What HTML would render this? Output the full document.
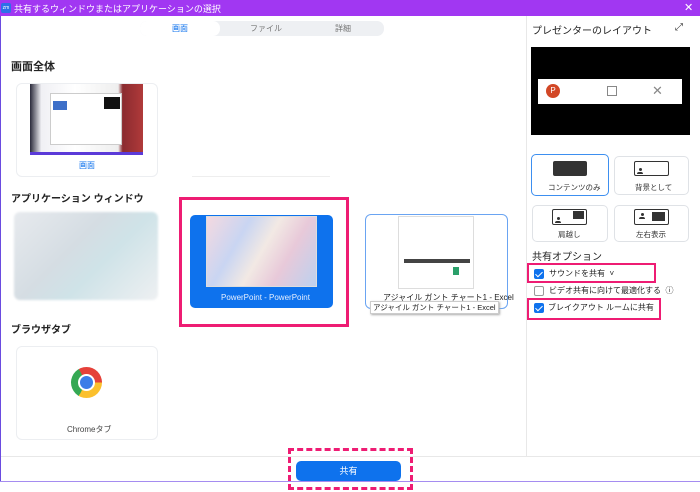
<!DOCTYPE html>
<html><head><meta charset="utf-8"><style>
*{margin:0;padding:0;box-sizing:border-box}
body{width:700px;height:492px;background:#fff;font-family:"Liberation Sans","Noto Sans CJK JP",sans-serif;position:relative;overflow:hidden;color:#222}
.a{position:absolute}
.t{font-size:10px;white-space:nowrap}
.card{position:absolute;border:1px solid #eceef1;border-radius:6px;background:#fff}
.lb{position:absolute;border:1px solid #dfe2e6;border-radius:5px;background:#fff}
.cb{position:absolute;width:10px;height:10px;border-radius:2px;background:#0e72ed}
.cb:after{content:"";position:absolute;left:3px;top:1px;width:3px;height:6px;border:solid #fff;border-width:0 1.5px 1.5px 0;transform:rotate(45deg)}
.ic{position:absolute;border:1.5px solid #333;border-radius:2px;background:#fff}
.p{position:absolute;width:6px;height:6px}
.p:before{content:"";position:absolute;left:1.5px;top:0;width:3px;height:3px;border-radius:50%;background:#333}
.p:after{content:"";position:absolute;left:0;top:3.5px;width:6px;height:2.5px;border-radius:2px 2px 0 0;background:#333}
</style></head><body>
<div class="a" style="left:0;top:0;width:700px;height:16px;background:#a137f2"></div>
<div class="a" style="left:1px;top:3px;width:10px;height:10px;background:#2d6fe8;border-radius:2px;color:#fff;font-size:5px;line-height:10px;text-align:center">zm</div>
<div class="a t" style="left:14px;top:2px;color:#fff;font-size:9px">共有するウィンドウまたはアプリケーションの選択</div>
<div class="a t" style="left:684px;top:1px;color:#fff;font-size:11px">✕</div>
<div class="a" style="left:0;top:16px;width:1px;height:466px;background:#6a4be0"></div>
<div class="a" style="left:0;top:481px;width:700px;height:1px;background:#a58cf0"></div>
<div class="a" style="left:140px;top:21px;width:244px;height:15px;background:#eef0f3;border-radius:7px"></div>
<div class="a" style="left:140px;top:21px;width:80px;height:15px;background:#fff;border-radius:7px"></div>
<div class="a t" style="left:172px;top:23px;font-size:8px;color:#0e72ed">画面</div>
<div class="a t" style="left:250px;top:23px;font-size:8px;color:#777">ファイル</div>
<div class="a t" style="left:335px;top:23px;font-size:8px;color:#777">詳細</div>
<div class="a t" style="left:11px;top:58px;font-size:11px;font-weight:bold">画面全体</div>
<div class="card" style="left:16px;top:83px;width:142px;height:94px"></div>
<div class="a" style="left:30px;top:84px;width:113px;height:71px;background:linear-gradient(90deg,#2a2a3a 0%,#f0f0f4 10%,#fff 40%,#eee 78%,#8b2b30 82%,#b03a3a 100%);border-bottom:3px solid #5b3ad8"></div>
<div class="a" style="left:50px;top:93px;width:72px;height:52px;background:#fff;border:1px solid #ccc"></div>
<div class="a" style="left:53px;top:101px;width:14px;height:9px;background:#3d6fc8"></div>
<div class="a" style="left:104px;top:97px;width:16px;height:12px;background:#111"></div>
<div class="a t" style="left:79px;top:160px;font-size:8px;color:#0e72ed">画面</div>
<div class="a" style="left:192px;top:176px;width:138px;height:1px;background:#eee"></div>
<div class="a t" style="left:11px;top:190px;font-size:10px;font-weight:bold">アプリケーション ウィンドウ</div>
<div class="a" style="left:14px;top:212px;width:144px;height:88px;border-radius:6px;background:linear-gradient(135deg,#e7eaee,#d5dde3 40%,#cfe3e8 60%,#eef0f2);filter:blur(1px)"></div>
<div class="a" style="left:179px;top:197px;width:170px;height:130px;border:3px solid #ee1c73"></div>
<div class="a" style="left:190px;top:215px;width:143px;height:93px;background:#0e72ed;border-radius:5px"></div>
<div class="a" style="left:206px;top:216px;width:111px;height:71px;background:linear-gradient(120deg,#f4d9e0,#c9d5f2 30%,#f2e9e4 50%,#e8c9d9 70%,#bcd1ef);border:1px solid #ddd"></div>
<div class="a t" style="left:221px;top:293px;font-size:8px;color:#e6efff">PowerPoint - PowerPoint</div>
<div class="a" style="left:365px;top:214px;width:143px;height:95px;border:1px solid #6aa4f2;border-radius:6px"></div>
<div class="a" style="left:398px;top:216px;width:76px;height:73px;background:#fff;border:1px solid #ddd"></div>
<div class="a" style="left:404px;top:259px;width:66px;height:4px;background:#444"></div>
<div class="a" style="left:453px;top:267px;width:6px;height:8px;background:#2aa06a"></div>
<div class="a t" style="left:383px;top:292px;font-size:8px">アジャイル ガント チャート1 - Excel</div>
<div class="a t" style="left:370px;top:301px;font-size:7.5px;background:#fff;border:1px solid #ccc;padding:0 2px;box-shadow:1px 1px 2px #aaa">アジャイル ガント チャート1 - Excel</div>
<div class="a t" style="left:11px;top:321px;font-size:10px;font-weight:bold">ブラウザタブ</div>
<div class="card" style="left:16px;top:346px;width:142px;height:94px"></div>
<div class="a" style="left:71px;top:367px;width:31px;height:31px;border-radius:50%;background:conic-gradient(from -30deg,#e5413a 0 120deg,#fbc02d 120deg 240deg,#35a853 240deg 360deg)"></div>
<div class="a" style="left:78px;top:374px;width:17px;height:17px;border-radius:50%;background:#3b7de8;border:2.5px solid #fff"></div>
<div class="a t" style="left:67px;top:424px;font-size:8px;color:#444">Chromeタブ</div>
<div class="a" style="left:1px;top:456px;width:699px;height:1px;background:#e8e8e8"></div>
<div class="a" style="left:296px;top:461px;width:105px;height:20px;background:#0e72ed;border-radius:5px;color:#fff;font-size:9px;text-align:center;line-height:20px">共有</div>
<div class="a" style="left:288px;top:448px;width:125px;height:42px;border:3px dashed #ee1c73"></div>
<div class="a" style="left:526px;top:16px;width:1px;height:440px;background:#e8e8e8"></div>
<div class="a t" style="left:532px;top:22px;font-size:10px">プレゼンターのレイアウト</div>
<div class="a t" style="left:675px;top:22px;font-size:10px;color:#333">⤢</div>
<div class="a" style="left:531px;top:47px;width:159px;height:88px;background:#000"></div>
<div class="a" style="left:538px;top:79px;width:144px;height:25px;background:#fff"></div>
<div class="a" style="left:546px;top:84px;width:14px;height:14px;border-radius:50%;background:#d24726;color:#fff;font-size:8px;text-align:center;line-height:14px">P</div>
<div class="a" style="left:607px;top:86px;width:10px;height:10px;border:1px solid #888"></div>
<div class="a t" style="left:652px;top:83px;font-size:13px;color:#888">✕</div>
<div class="lb" style="left:531px;top:154px;width:78px;height:42px;border:1.5px solid #3d8ff0"></div>
<div class="ic" style="left:553px;top:161px;width:34px;height:15px;background:#333"></div>
<div class="a t" style="left:548px;top:182px;font-size:7.5px;color:#333">コンテンツのみ</div>
<div class="lb" style="left:614px;top:156px;width:75px;height:39px"></div>
<div class="ic" style="left:634px;top:161px;width:35px;height:15px"></div>
<div class="p" style="left:637px;top:168px"></div>
<div class="a t" style="left:635px;top:182px;font-size:7.5px;color:#333">背景として</div>
<div class="lb" style="left:532px;top:205px;width:76px;height:37px"></div>
<div class="ic" style="left:552px;top:209px;width:35px;height:16px"></div>
<div class="a" style="left:573px;top:211px;width:11px;height:8px;background:#333"></div>
<div class="p" style="left:555px;top:217px"></div>
<div class="a t" style="left:558px;top:229px;font-size:7.5px;color:#333">肩越し</div>
<div class="lb" style="left:614px;top:205px;width:75px;height:37px"></div>
<div class="ic" style="left:634px;top:209px;width:35px;height:16px"></div>
<div class="a" style="left:652px;top:212px;width:13px;height:9px;background:#333"></div>
<div class="p" style="left:639px;top:213px"></div>
<div class="a t" style="left:636px;top:229px;font-size:7.5px;color:#333">左右表示</div>
<div class="a t" style="left:532px;top:248px;font-size:10px">共有オプション</div>
<div class="cb" style="left:534px;top:269px"></div>
<div class="a t" style="left:549px;top:268px;font-size:8px">サウンドを共有 &nbsp;˅</div>
<div class="a" style="left:534px;top:286px;width:10px;height:10px;border:1px solid #999;border-radius:2px"></div>
<div class="a t" style="left:549px;top:285px;font-size:8px">ビデオ共有に向けて最適化する &nbsp;ⓘ</div>
<div class="cb" style="left:534px;top:303px"></div>
<div class="a t" style="left:548px;top:302px;font-size:8px">ブレイクアウト ルームに共有</div>
<div class="a" style="left:527px;top:263px;width:129px;height:20px;border:2.5px solid #ee1c73"></div>
<div class="a" style="left:527px;top:298px;width:134px;height:22px;border:2.5px solid #ee1c73"></div>
</body></html>
